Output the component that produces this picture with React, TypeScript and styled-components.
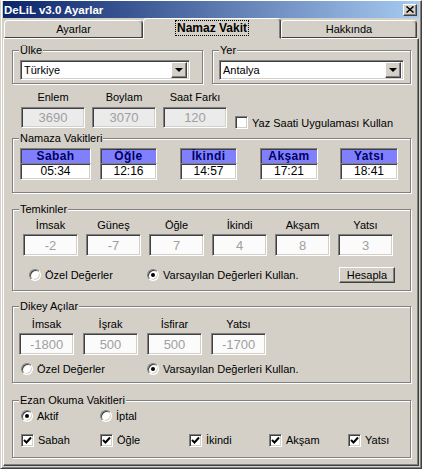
import React from 'react';
import styled, { createGlobalStyle, css } from 'styled-components';

const GlobalStyle = createGlobalStyle`
  html, body {
    margin: 0;
    padding: 0;
    background: #d4d0c8;
  }
  body {
    font-family: "Liberation Sans", Arial, sans-serif;
    font-size: 11px;
    color: #000;
  }
  * {
    box-sizing: border-box;
  }
`;

const sunken = css`
  border: 1px solid;
  border-color: #808080 #ffffff #ffffff #808080;
  box-shadow: inset 1px 1px 0 #404040, inset -1px -1px 0 #d4d0c8;
`;

const raised = css`
  border: 1px solid;
  border-color: #ffffff #404040 #404040 #ffffff;
  box-shadow: inset -1px -1px 0 #808080;
`;

const Window = styled.div`
  width: 422px;
  height: 469px;
  background: #d4d0c8;
  border-top: 1px solid #ffffff;
  border-left: 1px solid #d4d0c8;
  border-right: 1px solid #404040;
  border-bottom: 1px solid #404040;
  box-shadow: inset 1px 0 0 #ffffff, inset -1px -1px 0 #808080;
  padding: 0 2px 2px 2px;
  display: flex;
  flex-direction: column;
`;

const TitleBar = styled.div`
  height: 17px;
  flex: none;
  display: flex;
  align-items: center;
  justify-content: space-between;
  padding: 0 2px 0 1px;
  background: linear-gradient(to right, #0a246a, #a6caf0);
`;

const TitleText = styled.span`
  color: #ffffff;
  font-weight: bold;
  font-size: 11.5px;
`;

const CloseButton = styled.div`
  width: 14px;
  height: 12px;
  background: #d4d0c8;
  ${raised};
  display: flex;
  align-items: center;
  justify-content: center;
`;

const TabRow = styled.div`
  height: 20px;
  flex: none;
  display: flex;
  align-items: flex-end;
  padding-left: 1px;
  position: relative;
  z-index: 1;
`;

const Tab = styled.div<{ $w: number; $active?: boolean }>`
  width: ${p => p.$w}px;
  height: ${p => (p.$active ? 21 : 18)}px;
  margin-bottom: ${p => (p.$active ? -1 : 0)}px;
  background: #d4d0c8;
  border: 1px solid;
  border-color: #ffffff #404040 ${p => (p.$active ? '#d4d0c8' : '#404040')} #ffffff;
  border-radius: 4px 4px 0 0;
  box-shadow: inset -1px 0 0 #808080;
  display: flex;
  justify-content: center;
  align-items: ${p => (p.$active ? 'flex-start' : 'center')};
  padding-top: ${p => (p.$active ? 2 : 0)}px;
  font-weight: ${p => (p.$active ? 'bold' : 'normal')};
  font-size: ${p => (p.$active ? 12 : 11)}px;
`;

const FocusText = styled.span`
  outline: 1px dotted #000;
  outline-offset: 0;
  padding: 0 1px;
  line-height: 14px;
`;

const Panel = styled.div`
  flex: 1;
  border: 1px solid;
  border-color: #ffffff #404040 #404040 #ffffff;
  box-shadow: inset -1px -1px 0 #808080;
  padding: 0 7px 0 8px;
  display: flex;
  flex-direction: column;
`;

const Group = styled.div<{ $mt: number; $pad: string }>`
  position: relative;
  margin-top: ${p => p.$mt}px;
  border: 1px solid #808080;
  box-shadow: inset 1px 1px 0 #ffffff, 1px 1px 0 #ffffff;
  padding: ${p => p.$pad};
`;

const Legend = styled.span`
  position: absolute;
  top: -7px;
  left: 6px;
  padding: 0 1px;
  background: #d4d0c8;
  line-height: 13px;
`;

const TopRow = styled.div`
  display: grid;
  grid-template-columns: 191px 1fr;
  column-gap: 9px;
  margin-top: 11px;
`;

const Combo = styled.div<{ $w: number }>`
  width: ${p => p.$w}px;
  height: 20px;
  background: #ffffff;
  ${sunken};
  display: flex;
  align-items: center;
  justify-content: space-between;
  padding: 0 2px 0 3px;
`;

const DropButton = styled.div`
  width: 16px;
  height: 16px;
  background: #d4d0c8;
  ${raised};
  display: flex;
  align-items: center;
  justify-content: center;

  &::after {
    content: "";
    border-left: 4px solid transparent;
    border-right: 4px solid transparent;
    border-top: 4px solid #000;
  }
`;

const CoordRow = styled.div`
  display: flex;
  align-items: flex-end;
  gap: 7px;
  margin-top: 7px;
  padding-left: 9px;
`;

const Field = styled.div<{ $gap: number }>`
  display: flex;
  flex-direction: column;
  align-items: center;
  gap: ${p => p.$gap}px;
`;

const FieldLabel = styled.span`
  line-height: 13px;
  white-space: nowrap;
`;

const Edit = styled.div<{ $w: number; $h: number; $bg: string }>`
  width: ${p => p.$w}px;
  height: ${p => p.$h}px;
  background: ${p => p.$bg};
  ${sunken};
  color: #a0a0a0;
  font-size: 13px;
  display: flex;
  align-items: center;
  justify-content: center;
`;

const CheckItem = styled.label<{ $ml?: number; $mb?: number }>`
  display: flex;
  align-items: center;
  gap: 4px;
  margin-left: ${p => p.$ml ?? 0}px;
  margin-bottom: ${p => p.$mb ?? 0}px;
  white-space: nowrap;
`;

const CheckBox = styled.span`
  width: 13px;
  height: 13px;
  flex: none;
  background: #ffffff;
  ${sunken};
  display: flex;
  align-items: center;
  justify-content: center;
`;

const Radio = styled.span<{ $on?: boolean }>`
  width: 12px;
  height: 12px;
  flex: none;
  border-radius: 50%;
  background: #ffffff;
  ${sunken};
  display: flex;
  align-items: center;
  justify-content: center;

  &::after {
    content: "";
    width: 4px;
    height: 4px;
    border-radius: 50%;
    background: ${p => (p.$on ? '#000' : 'transparent')};
  }
`;

const TimesGrid = styled.div`
  display: grid;
  grid-template-columns: repeat(5, 80px);
`;

const TimeCell = styled.div<{ $w: number }>`
  width: ${p => p.$w}px;
  display: flex;
  flex-direction: column;
`;

const TimeHead = styled.div`
  height: 15px;
  background: #8080ff;
  border-top: 1px solid #808080;
  border-left: 1px solid #808080;
  border-right: 1px solid #ffffff;
  box-shadow: inset 1px 1px 0 #404040;
  color: #000060;
  font-weight: bold;
  font-size: 12px;
  letter-spacing: 0.4px;
  line-height: 14px;
  text-align: center;
`;

const TimeValue = styled.div`
  height: 17px;
  background: #ffffff;
  ${sunken};
  font-size: 12px;
  line-height: 15px;
  text-align: center;
`;

const InputGrid = styled.div<{ $cols: number; $gap: number }>`
  display: grid;
  grid-template-columns: repeat(${p => p.$cols}, 55px);
  column-gap: ${p => p.$gap}px;
`;

const OptionRow = styled.div<{ $cols: string; $mt: number; $pl: number }>`
  display: grid;
  grid-template-columns: ${p => p.$cols};
  align-items: center;
  margin-top: ${p => p.$mt}px;
  padding-left: ${p => p.$pl}px;
  height: 16px;
`;

const PushButton = styled.div`
  width: 56px;
  height: 16px;
  background: #d4d0c8;
  ${raised};
  display: flex;
  align-items: center;
  justify-content: center;
  margin-right: 15px;
`;

const Check = () => (
  <svg width="9" height="9" viewBox="0 0 9 9">
    <polyline points="1,4 3.5,6.5 8,1.5" fill="none" stroke="#000" strokeWidth="2" />
  </svg>
);

const CloseGlyph = () => (
  <svg width="8" height="7" viewBox="0 0 8 7">
    <path d="M0.5 0.5 L7.5 6.5 M7.5 0.5 L0.5 6.5" stroke="#000" strokeWidth="1.5" />
  </svg>
);

const vakitler = [
  { name: 'Sabah', time: '05:34', w: 71 },
  { name: 'Öğle', time: '12:16', w: 57 },
  { name: 'İkindi', time: '14:57', w: 57 },
  { name: 'Akşam', time: '17:21', w: 58 },
  { name: 'Yatsı', time: '18:41', w: 58 },
];

const temkinler = [
  ['İmsak', '-2'],
  ['Güneş', '-7'],
  ['Öğle', '7'],
  ['İkindi', '4'],
  ['Akşam', '8'],
  ['Yatsı', '3'],
];

const acilar = [
  ['İmsak', '-1800'],
  ['İşrak', '500'],
  ['İsfirar', '500'],
  ['Yatsı', '-1700'],
];

export default function App() {
  return (
    <>
      <GlobalStyle />
      <Window>
        <TitleBar>
          <TitleText>DeLiL v3.0 Ayarlar</TitleText>
          <CloseButton>
            <CloseGlyph />
          </CloseButton>
        </TitleBar>

        <TabRow>
          <Tab $w={139}>Ayarlar</Tab>
          <Tab $w={138} $active>
            <FocusText>Namaz Vakit</FocusText>
          </Tab>
          <Tab $w={136}>Hakkında</Tab>
        </TabRow>

        <Panel>
          <TopRow>
            <Group $mt={0} $pad="9px 0 3px 7px">
              <Legend>Ülke</Legend>
              <Combo $w={170}>
                <span>Türkiye</span>
                <DropButton />
              </Combo>
            </Group>
            <Group $mt={0} $pad="9px 0 3px 6px">
              <Legend>Yer</Legend>
              <Combo $w={185}>
                <span>Antalya</span>
                <DropButton />
              </Combo>
            </Group>
          </TopRow>

          <CoordRow>
            <Field $gap={3}>
              <FieldLabel>Enlem</FieldLabel>
              <Edit $w={64} $h={21} $bg="#ebebeb">3690</Edit>
            </Field>
            <Field $gap={3}>
              <FieldLabel>Boylam</FieldLabel>
              <Edit $w={64} $h={21} $bg="#ebebeb">3070</Edit>
            </Field>
            <Field $gap={3}>
              <FieldLabel>Saat Farkı</FieldLabel>
              <Edit $w={64} $h={21} $bg="#ebebeb">120</Edit>
            </Field>
            <CheckItem $ml={1} $mb={-1}>
              <CheckBox />
              Yaz Saati Uygulaması Kullan
            </CheckItem>
          </CoordRow>

          <Group $mt={10} $pad="9px 0 12px 7px">
            <Legend>Namaza Vakitleri</Legend>
            <TimesGrid>
              {vakitler.map(v => (
                <TimeCell key={v.name} $w={v.w}>
                  <TimeHead>{v.name}</TimeHead>
                  <TimeValue>{v.time}</TimeValue>
                </TimeCell>
              ))}
            </TimesGrid>
          </Group>

          <Group $mt={16} $pad="9px 0 7px 10px">
            <Legend>Temkinler</Legend>
            <InputGrid $cols={6} $gap={8}>
              {temkinler.map(([label, value]) => (
                <Field key={label} $gap={2}>
                  <FieldLabel>{label}</FieldLabel>
                  <Edit $w={55} $h={22} $bg="#fbfbfb">{value}</Edit>
                </Field>
              ))}
            </InputGrid>
            <OptionRow $cols="118px 1fr auto" $mt={11} $pl={6}>
              <CheckItem>
                <Radio />
                Özel Değerler
              </CheckItem>
              <CheckItem>
                <Radio $on />
                Varsayılan Değerleri Kullan.
              </CheckItem>
              <PushButton>Hesapla</PushButton>
            </OptionRow>
          </Group>

          <Group $mt={15} $pad="11px 0 5px 6px">
            <Legend>Dikey Açılar</Legend>
            <InputGrid $cols={4} $gap={9}>
              {acilar.map(([label, value]) => (
                <Field key={label} $gap={2}>
                  <FieldLabel>{label}</FieldLabel>
                  <Edit $w={55} $h={22} $bg="#fbfbfb">{value}</Edit>
                </Field>
              ))}
            </InputGrid>
            <OptionRow $cols="126px 1fr" $mt={6} $pl={2}>
              <CheckItem>
                <Radio />
                Özel Değerler
              </CheckItem>
              <CheckItem>
                <Radio $on />
                Varsayılan Değerleri Kullan.
              </CheckItem>
            </OptionRow>
          </Group>

          <Group $mt={17} $pad="7px 0 9px 8px">
            <Legend>Ezan Okuma Vakitleri</Legend>
            <OptionRow $cols="79px 1fr" $mt={0} $pl={0}>
              <CheckItem>
                <Radio $on />
                Aktif
              </CheckItem>
              <CheckItem>
                <Radio />
                İptal
              </CheckItem>
            </OptionRow>
            <OptionRow $cols="79px 89px 80px 79px 1fr" $mt={8} $pl={0}>
              {['Sabah', 'Öğle', 'İkindi', 'Akşam', 'Yatsı'].map(name => (
                <CheckItem key={name}>
                  <CheckBox>
                    <Check />
                  </CheckBox>
                  {name}
                </CheckItem>
              ))}
            </OptionRow>
          </Group>
        </Panel>
      </Window>
    </>
  );
}
